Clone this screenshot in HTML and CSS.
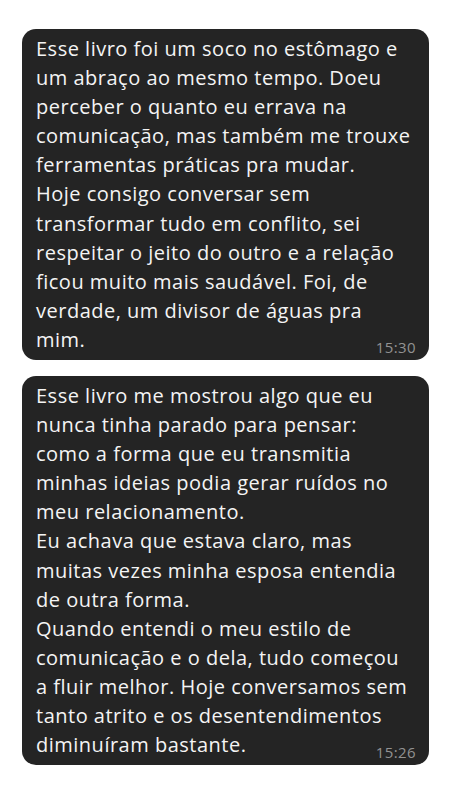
FILE: index.html
```html
<!DOCTYPE html>
<html lang="pt-BR">
<head>
  <meta charset="UTF-8">
  <meta name="viewport" content="width=device-width, initial-scale=1.0">
  <title>Depoimentos</title>
  <link rel="stylesheet" href="styles.css">
</head>
<body>
  <div class="chat">
    <div class="bubble">
      <p class="message">Esse livro foi um soco no estômago e um abraço ao mesmo tempo. Doeu perceber o quanto eu errava na comunicação, mas também me trouxe ferramentas práticas pra mudar.
Hoje consigo conversar sem transformar tudo em conflito, sei respeitar o jeito do outro e a relação ficou muito mais saudável. Foi, de verdade, um divisor de águas pra mim.<span class="time">15:30</span></p>
    </div>

    <div class="bubble">
      <p class="message">Esse livro me mostrou algo que eu nunca tinha parado para pensar: como a forma que eu transmitia minhas ideias podia gerar ruídos no meu relacionamento.
Eu achava que estava claro, mas muitas vezes minha esposa entendia de outra forma.
Quando entendi o meu estilo de comunicação e o dela, tudo começou a fluir melhor. Hoje conversamos sem tanto atrito e os desentendimentos diminuíram bastante.<span class="time">15:26</span></p>
    </div>
  </div>
</body>
</html>
```

FILE: styles.css
```css
:root {
  --bubble-color: #242424;
  --text-color: #f4f4f4;
  --time-color: #929292;
  --border-radius: 14px;
}

body {
  font-family: 'Open Sans', 'Noto Sans', sans-serif;
  margin: 0;
  padding: 29px 21px 0 22px;
  background-color: #ffffff;
}

.chat {
  display: flex;
  flex-direction: column;
  gap: 16px;
}

.bubble {
  background-color: var(--bubble-color);
  border-radius: var(--border-radius);
  padding: 5px 13px 5px 14px;
  display: flow-root;
}

.message {
  margin: 0;
  color: var(--text-color);
  font-size: 20px;
  line-height: 29.1px;
  letter-spacing: 0.5px;
  white-space: pre-line;
}

.time {
  float: right;
  margin-top: 15px;
  font-size: 15px;
  line-height: 1;
  letter-spacing: 0.4px;
  color: var(--time-color);
}
```
